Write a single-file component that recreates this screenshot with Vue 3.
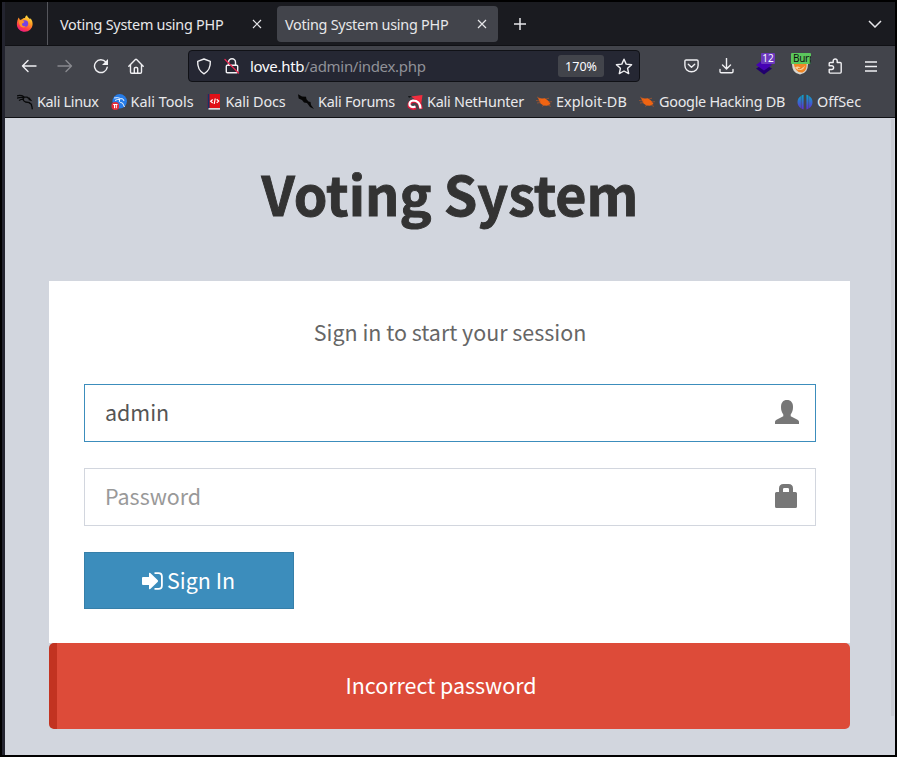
<script setup>
const bookmarks = [
  { label: 'Kali Linux', icon: 'dragon', width: 93.5, tracking: -0.32 },
  { label: 'Kali Tools', icon: 'tools', width: 95, tracking: 0 },
  { label: 'Kali Docs', icon: 'docs', width: 92.5, tracking: -0.12 },
  { label: 'Kali Forums', icon: 'forums', width: 109, tracking: -0.23 },
  { label: 'Kali NetHunter', icon: 'hunter', width: 129, tracking: -0.23 },
  { label: 'Exploit-DB', icon: 'bug', width: 103, tracking: 0.05 },
  { label: 'Google Hacking DB', icon: 'bug', width: 158, tracking: -0.27 },
  { label: 'OffSec', icon: 'offsec', width: 70, tracking: 0 }
]
</script>

<template>
  <div class="window">
    <div class="tabs">
      <div class="pinned">
        <svg width="18" height="18" viewBox="0 0 18 18">
          <defs>
            <linearGradient id="fox" x1=".8" y1="0" x2=".3" y2="1">
              <stop offset="0" stop-color="#fff14a" /><stop offset=".4" stop-color="#ff9a22" /><stop offset=".75" stop-color="#ff3d48" /><stop offset="1" stop-color="#e9178a" />
            </linearGradient>
          </defs>
          <path d="M2.700 2.600 4 5l2-.8C7 3.200 8 3 9 3.100 9 1.600 10 .7 11 .2c.3 2 2 2.400 3.100 4l.4-1c1.600 1.900 2.300 4 2.100 6.400-.4 4.200-3.600 7.200-7.700 7.200S1 13.800.9 9.700C.8 7 1.600 4.700 2.700 2.600z" fill="url(#fox)" />
          <circle cx="8.800" cy="8.600" r="3.400" fill="#7542e5" />
          <path d="M3 6c2-1.500 4-.9 5.500.8-.5 1.300-2.200 1-2.500 2.200-.2 1.500 1.700 2.800 3.700 2.200C7.500 13.900 2.500 12 3 6z" fill="#ff9228" />
        </svg>
      </div>
      <div class="tab"><span class="title">Voting System using PHP</span>
        <svg class="close" width="10" height="10" viewBox="0 0 10 10"><path d="M1 1l8 8M9 1 1 9" /></svg>
      </div>
      <div class="tab active"><span class="title">Voting System using PHP</span>
        <svg class="close" width="10" height="10" viewBox="0 0 10 10"><path d="M1 1l8 8M9 1 1 9" /></svg>
      </div>
      <svg class="plus" width="14" height="14" viewBox="0 0 14 14"><path d="M7 1v12M1 7h12" /></svg>
      <svg class="chevron" width="14" height="8" viewBox="0 0 14 8"><path d="M1 1l6 6 6-6" /></svg>
    </div>

    <div class="nav">
      <svg class="ico back" width="16" height="16" viewBox="0 0 16 16"><path d="M15 8H1.500M7 2.500 1.500 8 7 13.500" /></svg>
      <svg class="ico forward" width="16" height="16" viewBox="0 0 16 16"><path d="M1 8h13.500M9 2.500 14.500 8 9 13.500" /></svg>
      <svg class="ico reload" width="16" height="16" viewBox="0 0 16 16"><path d="M14.200 9.300A6.400 6.400 0 1 1 12.800 4" /><path class="solid" d="M15 1v6H9z" /></svg>
      <svg class="ico home" width="16" height="16" viewBox="0 0 16 16"><path d="M.8 8.200 7.400 1.500q.6-.5 1.200 0l6.600 6.700M2.500 7v7q0 1.200 1.200 1.200h8.600q1.200 0 1.200-1.200V7M6.300 15v-4.500q0-1 1-1h1.400q1 0 1 1V15" /></svg>
      <div class="url">
        <svg class="ico shield" width="16" height="17" viewBox="0 0 16 17"><path d="M8 1 14.300 3.400Q14.800 12 8 15.800 1.200 12 1.700 3.400z" /></svg>
        <svg class="ico lock" width="16" height="16" viewBox="0 0 16 16"><path d="M4.500 7V4.200a3.500 3.500 0 0 1 7 0V7M3.300 7.200h9.400q1 0 1 1v5.500q0 1-1 1H3.300q-1 0-1-1V8.200q0-1 1-1z" /><path class="slash" d="M1 1.500l13.500 13.500" /></svg>
        <div class="address"><span class="host">love.htb</span>/admin/index.php</div>
        <span class="zoom">170%</span>
        <svg class="ico star" width="18" height="17" viewBox="0 0 18 17"><path d="M9 1.200l2.200 4.900 5.400.6-4 3.600 1.100 5.300L9 13l-4.700 2.600 1.100-5.300-4-3.600 5.400-.6z" /></svg>
      </div>
      <svg class="ico pocket" width="15" height="14" viewBox="0 0 15 14"><path d="M2.200 1h10.600q1.300 0 1.300 1.300v4.200a6.600 6.300 0 0 1-13.200 0V2.300Q.9 1 2.200 1zM4.300 5.300l3.200 3 3.200-3" /></svg>
      <svg class="ico download" width="15" height="16" viewBox="0 0 15 16"><path d="M7.500.5v10M3.500 7l4 4 4-4M1 11.500v2q0 1.300 1.300 1.300h10.400q1.300 0 1.300-1.300v-2" /></svg>
      <div class="ext wapp">
        <svg width="18" height="20" viewBox="0 0 18 20"><path d="M1 13.500 9 9l8 4.500L9 19.500z" fill="#21006d" /><path d="M1 10 9 4l8 6-8 5.500z" fill="#4602b5" /></svg>
        <span class="badge purple">12</span>
      </div>
      <div class="ext burp">
        <svg width="18" height="20" viewBox="0 0 18 20"><path d="M1 9h16q0 9.500-8 10.500Q1 18.500 1 9z" fill="#d8d6cf" /><path d="M2.500 8h13q1 7.500-4 9.500-7 1-9-9.500z" fill="#f28625" /><path d="M4 12.500q3-2 5 0t5-2q-1 4-4 4.500-4 .5-6-2.500z" fill="#f6cf9a" /><path d="M7 13.500q2 1 4-1" fill="none" stroke="#e07a20" /></svg>
        <span class="badge green">Burp</span>
      </div>
      <svg class="ico puzzle" width="15" height="16" viewBox="0 0 15 16"><path d="M1.200 5.500q0-1 1-1h3V3a2 2 0 0 1 4 0v1.500h3q1 0 1 1v8.600q0 1-1 1h-10q-1 0-1-1v-2.600h2.500a1.900 1.900 0 0 0 0-3.800H1.200z" /></svg>
      <svg class="ico menu" width="12" height="11" viewBox="0 0 12 11"><path d="M0 1h12M0 5.500h12M0 10h12" /></svg>
    </div>

    <div class="bookmarks">
      <div v-for="b in bookmarks" :key="b.label" class="bookmark" :style="{ width: b.width + 'px', letterSpacing: b.tracking + 'px' }">
        <svg width="16" height="16" viewBox="0 0 16 16">
          <g v-if="b.icon === 'dragon'" fill="none" stroke="#08090a" stroke-width="1.300">
            <path d="M0 1.800q4-1 7 1l3 .3 3 2M0 4.200q4-1.500 7.500-.5M2 6.500q3-2 5-1.200M7 3.500q-2 3 1.500 4.500l4 .7q2.500 1.500 2.800 6.500M12 4l1.500 2-2-.7M12 9l3 1.500" />
          </g>
          <g v-else-if="b.icon === 'tools'">
            <circle cx="8.700" cy="7.300" r="7.200" fill="#267ce8" />
            <path d="M3 4q4-1 6.500.5L12 5l1 2M4 6.500q3-1.700 5-1-2 2 .5 3l2 .5 2 4" fill="none" stroke="#fff" stroke-width=".9" />
            <circle cx="4.300" cy="12" r="3.900" fill="#e52d3a" /><path d="M2.200 10.500h4.300M3.500 10.500v3.700M5.300 10.500v3.700" stroke="#fff" />
          </g>
          <g v-else-if="b.icon === 'docs'">
            <path d="M1.500 0h12.500v15H1.500z" fill="#e11017" /><path d="M1.500 0h2v15h-2z" fill="#123566" /><path d="M2.500 14H14v1.700H2.500z" fill="#d9dadd" />
            <path d="M6.700 5.500 4.700 7.300l2 1.700m4-3.700 2 1.800-2 1.800M9.200 4.500l-1 5.500" fill="none" stroke="#fff" stroke-width="1.200" />
          </g>
          <path v-else-if="b.icon === 'forums'" d="M0 .2 4 2.500l4 .2.500 2.500 2 2.300 2 .6.500 3 3 4-4-2-3-4-3-.5L4 6 .7 4.500z" fill="#060606" />
          <g v-else-if="b.icon === 'hunter'">
            <path d="M4 2.500 15.500 1l-1.300 9L9 6z" fill="#f32d3e" /><path d="M1 2h4L2 4z" fill="#17191c" />
            <path d="M14 15Q13 6.500 6.500 7 1.500 8 2.500 12.500 5 15 9 13.500" fill="none" stroke="#e5193c" stroke-width="3.600" />
            <path d="M13.500 14.500Q13 6.500 6 6.500 1.500 7.500 2.700 11.500 5 14 8.500 12.500" fill="none" stroke="#fff" stroke-width="2.200" />
          </g>
          <g v-else-if="b.icon === 'bug'">
            <path d="M2 4 6 4.500l3-.3 3.500 2.800 2 3-3.500 1.800-3.500-.3L4.500 9.500z" fill="#f06412" />
            <path d="M1 3l4 2M0 6.500l5 .5M1 9l4-.5M10 5l3-.8M12 8l4-.3M8 11l-2 1.500m6-1.500 3 1.500" fill="none" stroke="#c65a24" stroke-width=".6" />
          </g>
          <g v-else>
            <defs><linearGradient id="off" gradientUnits="userSpaceOnUse" x1="0" x2="0" y1="0" y2="16"><stop stop-color="#06adc8" /><stop offset="1" stop-color="#6428d4" /></linearGradient></defs>
            <path d="M6.600.8v14.600q-1.300-.2-2.200-.9V1.700q1-.7 2.200-.9zM3.900 2v12.200Q.5 12 .5 8t3.400-6zM9.400.8v14.600q1.300-.2 2.200-.9V1.700q-1-.7-2.200-.9zM12.100 2v12.200Q15.500 12 15.500 8t-3.400-6z" fill="url(#off)" />
          </g>
        </svg>
        <span>{{ b.label }}</span>
      </div>
    </div>

    <main class="page">
      <h1>Voting System</h1>
      <section class="login">
        <p>Sign in to start your session</p>
        <div class="field focused"><span>admin</span>
          <svg width="24" height="24" viewBox="0 0 24 24"><path d="M12 0c4 0 6 2.700 6 7 0 3-.7 5.300-2.300 7.500v1.700l6.800 3.600q1.500.8 1.500 2V24H0v-2.200q0-1.200 1.500-2l6.800-3.600v-1.700C6.700 12.300 6 10 6 7c0-4.300 2-7 6-7z" /></svg>
        </div>
        <div class="field"><span class="placeholder">Password</span>
          <svg width="24" height="24" viewBox="0 0 24 24"><path fill-rule="evenodd" d="M4 8V4.500Q4 0 8.500 0h5Q18 0 18 4.500V8h2.500Q22 8 22 9.500v13q0 1.500-1.500 1.500h-19Q0 24 0 22.500v-13Q0 8 1.500 8zm4 0h6V5.300Q14 4 12.700 4H9.300Q8 4 8 5.300z" /></svg>
        </div>
        <button class="signin">
          <svg width="21" height="18" viewBox="0 0 21 18"><path d="M0 6q0-1 1-1h6V1.500Q7 .2 8.300 1l7.300 7q1 1 0 2l-7.300 7Q7 17.800 7 16.500V13H1q-1 0-1-1z" fill="#fff" /><path d="M12.500 1.100h4q3.400 0 3.400 3.400v9q0 3.400-3.400 3.400h-4" fill="none" stroke="#fff" stroke-width="1.800" /></svg>
          <span>Sign In</span>
        </button>
      </section>
      <div class="callout">Incorrect password</div>
      <i class="scrollbar"></i>
    </main>
  </div>
</template>

<style>
body { background: #000; }
</style>

<style scoped>
.window { box-sizing: border-box; width: 897px; height: 757px; border: 2px solid #000; padding-left: 3px; background: #23242f; overflow: hidden; font-family: "Noto Sans", sans-serif; color: #fbfbfe; }
svg { flex: none; display: block; }
.tabs { height: 43px; background: #1a1b20; display: flex; align-items: center; border-bottom: 1px solid #101115; }
.pinned { width: 43px; height: 43px; border-right: 1px solid #55565c; padding-left: 11px; box-sizing: border-box; display: flex; align-items: center; }
.tab { width: 221px; height: 36px; box-sizing: border-box; padding: 0 11px 0 8px; display: flex; align-items: center; justify-content: space-between; }
.tab:nth-child(2) { margin-left: 4px; width: 216px; padding-right: 6px; }
.tab.active { background: #42444b; border-radius: 4px; margin-left: 9px; }
.title { padding-top: 2px; font-size: 14.400px; letter-spacing: -.25px; white-space: nowrap; color: #e8e8ea; }
.close, .plus, .chevron { fill: none; stroke: #e6e6e9; stroke-width: 1.200; }
.plus { margin-left: 15px; stroke-width: 1.500; }
.chevron { margin-left: auto; margin-right: 13px; stroke-width: 1.500; }
.nav { height: 40px; background: #42444b; display: flex; align-items: center; box-sizing: border-box; }
.ico { fill: none; stroke: #f0f0f3; stroke-width: 1.400; stroke-linejoin: round; stroke-linecap: round; }
.solid { fill: #f0f0f3; stroke: none; }
.back { margin-left: 16px; }
.forward { margin-left: 20px; opacity: .4; }
.reload { margin-left: 20px; }
.home { margin-left: 19px; }
.url { width: 452px; height: 32px; margin-left: 44px; box-sizing: border-box; border: 1px solid #101116; border-radius: 4px; background: #252733; display: flex; align-items: center; }
.shield { margin-left: 7px; }
.lock { margin-left: 12px; }
.slash { stroke: #e22850; }
.address { width: 308px; margin-left: 10px; color: #909198; font-size: 15px; letter-spacing: -.3px; white-space: nowrap; }
.host { color: #fbfbfe; }
.zoom { width: 46px; height: 22px; border-radius: 3px; background: #42444b; font-size: 12.500px; line-height: 23px; text-align: center; }
.star { margin-left: 11px; }
.pocket { margin-left: 44px; }
.download { margin-left: 20px; }
.ext { position: relative; width: 20px; height: 32px; }
.ext svg { margin-top: 5px; }
.wapp { margin-left: 21px; }
.burp { margin-left: 16px; }
.badge { position: absolute; box-sizing: border-box; top: 3px; left: 6px; width: 14px; height: 11px; border-radius: 1px; font-size: 10px; line-height: 11px; text-align: center; }
.purple { background: #6b39bd; }
.green { left: 0; width: 20px; overflow: hidden; background: #5bc75c; color: #111; text-align: left; padding-left: 2px; letter-spacing: -.3px; }
.puzzle { margin-left: 17px; }
.menu { margin-left: 22px; }
.bookmarks { height: 31px; padding-left: 12px; background: #42444b; border-bottom: 1px solid #111216; display: flex; align-items: center; }
.bookmark { flex: none; display: flex; align-items: center; gap: 4px; white-space: nowrap; font-size: 14.400px; color: #e9e9eb; }
.page { position: relative; height: 637px; box-sizing: border-box; padding: 42px 45px 0 44px; background: #d2d6de; font-family: "Noto Sans CJK SC", sans-serif; }
h1 { margin: 0; padding-left: 1px; height: 121px; box-sizing: border-box; line-height: 66px; text-align: center; color: #333; font-size: 53.800px; font-weight: 700; -webkit-text-stroke: .9px #333; }
.login { height: 362px; box-sizing: border-box; padding: 34px 34px 0 35px; background: #fff; color: #666; font-size: 21.450px; }
p { margin: 0 0 35px; line-height: 34px; text-align: center; }
.field { height: 58px; box-sizing: border-box; border: 1px solid #d2d6de; margin-bottom: 26px; padding: 0 16px 0 20px; display: flex; align-items: center; justify-content: space-between; color: #555; }
.field span { padding-bottom: 4px; }
.focused { border-color: #3c8dbc; }
.field svg { fill: #777; margin-top: -2px; }
.placeholder { color: #999; }
.signin { width: 210px; height: 57px; border: 1px solid #367fa9; padding: 0; background: #3c8dbc; color: #fff; display: flex; align-items: center; justify-content: center; gap: 4px; font: inherit; }
.signin span { padding-bottom: 2px; }
.signin svg { margin-left: -1px; }
.callout { height: 86px; box-sizing: border-box; border-left: 8px solid #c23321; border-radius: 5px; background: #dd4b39; color: #fff; text-align: center; line-height: 84px; padding-right: 25px; font-size: 21.450px; }
.scrollbar { position: absolute; right: 1px; top: 1px; width: 3px; height: 597px; background: #c7cad2; }
</style>
